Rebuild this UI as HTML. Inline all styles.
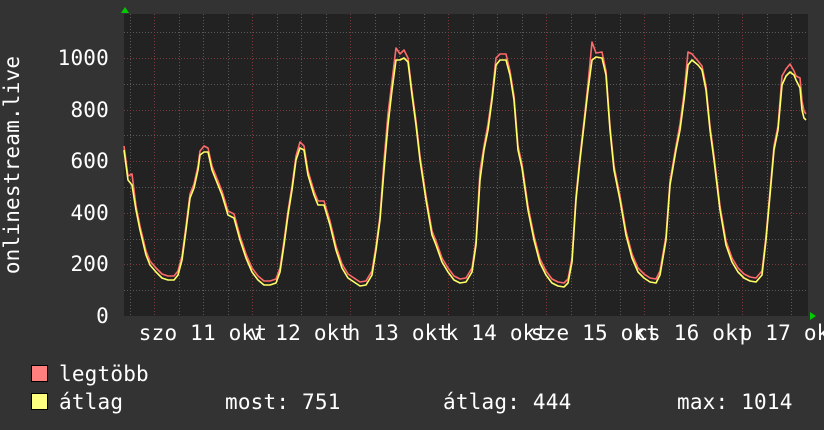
<!DOCTYPE html>
<html><head><meta charset="utf-8"><style>
html,body{margin:0;padding:0;background:#333;width:824px;height:430px;overflow:hidden}
svg text{font-family:"DejaVu Sans Mono","Liberation Mono",monospace;font-size:21px;fill:#fff}
</style></head><body>
<svg width="824" height="430" xmlns="http://www.w3.org/2000/svg">
<rect x="0" y="0" width="824" height="430" fill="#333"/>
<rect x="124" y="14" width="684" height="302" fill="#222"/>
<g stroke="#5a5a5a" stroke-width="1" stroke-dasharray="1,2">
<path d="M130.5 14V316M179.5 14V316M203.5 14V316M228.5 14V316M277.5 14V316M301.5 14V316M326.5 14V316M375.5 14V316M399.5 14V316M424.5 14V316M473.5 14V316M497.5 14V316M522.5 14V316M571.5 14V316M595.5 14V316M620.5 14V316M669.5 14V316M693.5 14V316M718.5 14V316M767.5 14V316M791.5 14V316"/>
<path d="M124 32.5H808M124 84.5H808M124 135.5H808M124 187.5H808M124 239.5H808M124 290.5H808"/>
</g>
<g stroke="#7a3a3a" stroke-width="1" stroke-dasharray="1,2">
<path d="M154.5 14V316M252.5 14V316M350.5 14V316M448.5 14V316M546.5 14V316M644.5 14V316M742.5 14V316"/>
<path d="M124 58.5H808M124 110.5H808M124 161.5H808M124 213.5H808M124 264.5H808"/>
</g>
<polygon points="121,13 125,7 129,13" fill="#0c0"/>
<polygon points="810,312 816,316 810,320" fill="#0c0"/>
<g fill="none" stroke-width="1.6" stroke-linejoin="round">
<polyline stroke="#ff6a6a" transform="translate(0,-4)" points="124,150 128,180 132,178 136,210 140,230 146,255 150,265 156,272 162,278 168,280 174,280 178,275 182,260 186,230 190,198 194,188 198,170 200,155 204,150 208,152 212,170 216,180 222,195 228,215 234,218 240,240 246,258 252,272 258,280 264,285 270,285 276,283 280,272 284,245 288,215 292,190 296,160 300,146 304,150 308,175 314,195 318,205 324,205 330,225 336,250 342,268 348,278 354,282 360,286 366,285 372,275 376,250 380,220 384,165 388,118 392,85 396,52 400,58 404,54 408,62 412,95 416,125 420,160 426,200 432,235 436,245 442,262 448,272 454,280 460,283 466,282 472,272 476,245 480,175 484,150 488,128 492,100 496,62 500,58 506,58 510,75 514,100 518,150 522,168 528,210 534,240 540,263 546,275 552,283 558,286 564,287 568,283 572,262 576,200 580,160 584,125 588,88 592,46 596,57 602,56 606,75 610,130 614,170 620,200 626,235 632,258 638,272 644,278 650,282 656,283 660,275 666,240 670,185 676,150 680,128 684,98 688,56 692,58 698,65 702,70 706,90 710,130 714,160 720,210 726,245 732,262 738,272 744,278 750,281 756,282 762,275 766,240 770,195 774,150 778,130 782,80 786,73 790,68 794,75 796,80 800,82 802,105 804,115 806,118"/>
<polyline stroke="#ffff66" points="124,150 128,180 132,185 136,210 140,230 146,255 150,265 156,272 162,278 168,280 174,280 178,275 182,260 186,230 190,198 194,188 198,170 200,155 204,152 208,152 212,170 216,180 222,195 228,215 234,218 240,240 246,258 252,272 258,280 264,285 270,285 276,283 280,272 284,245 288,215 292,190 296,160 300,148 304,150 308,175 314,195 318,205 324,205 330,225 336,250 342,268 348,278 354,282 360,286 366,285 372,275 376,250 380,220 384,170 388,125 392,90 396,60 400,60 404,58 408,62 412,95 416,125 420,160 426,200 432,235 436,245 442,262 448,272 454,280 460,283 466,282 472,272 476,245 480,180 484,150 488,130 492,100 496,65 500,60 506,60 510,75 514,100 518,150 522,168 528,210 534,240 540,263 546,275 552,283 558,286 564,287 568,283 572,262 576,200 580,160 584,125 588,90 592,60 596,57 602,58 606,75 610,130 614,170 620,200 626,235 632,258 638,272 644,278 650,282 656,283 660,275 666,240 670,185 676,150 680,130 684,100 688,65 692,60 698,65 702,70 706,90 710,130 714,160 720,210 726,245 732,262 738,272 744,278 750,281 756,282 762,275 766,240 770,195 774,150 778,130 782,85 786,76 790,72 794,75 796,80 800,88 802,110 804,118 806,120"/>
</g>
<g text-anchor="end" letter-spacing="0.2">
<text x="109" y="65">1000</text>
<text x="109" y="117">800</text>
<text x="109" y="168">600</text>
<text x="109" y="220">400</text>
<text x="109" y="271">200</text>
<text x="109" y="323">0</text>
</g>
<text transform="translate(19,165) rotate(-90)" text-anchor="middle" letter-spacing="0.2">onlinestream.live</text>
<g text-anchor="middle" letter-spacing="0.2">
<text x="203" y="340">szo 11 okt</text>
<text x="301" y="340">v 12 okt</text>
<text x="399" y="340">h 13 okt</text>
<text x="497" y="340">k 14 okt</text>
<text x="595" y="340">sze 15 okt</text>
<text x="693" y="340">cs 16 okt</text>
<text x="791" y="340">p 17 okt</text>
</g>
<rect x="31.5" y="365.5" width="16" height="16" fill="#ff7f7f" stroke="#000"/>
<rect x="31.5" y="393.5" width="16" height="16" fill="#ffff7f" stroke="#000"/>
<g letter-spacing="0.2">
<text x="59" y="381">legtöbb</text>
<text x="59" y="409">átlag</text>
<text x="225" y="409">most: 751</text>
<text x="443" y="409">átlag: 444</text>
<text x="677" y="409">max: 1014</text>
</g>
</svg>
</body></html>
